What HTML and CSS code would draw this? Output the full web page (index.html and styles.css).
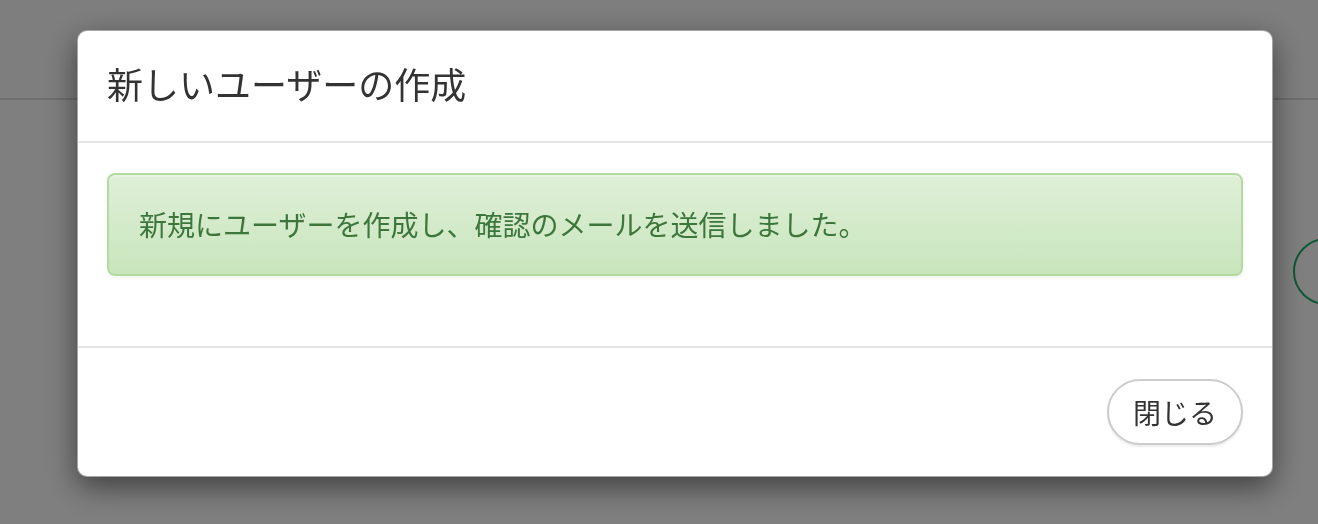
FILE: index.html
```html
<!DOCTYPE html>
<html lang="ja">
<head>
<meta charset="utf-8">
<title>新しいユーザーの作成</title>
<link rel="stylesheet" href="styles.css">
</head>
<body>
<div class="page">
  <div class="page-header"></div>
  <div class="page-content">
    <div class="page-action"></div>
  </div>
</div>
<div class="backdrop"></div>
<div class="modal-layer">
  <div class="modal">
    <div class="modal-header">
      <h4 class="modal-title">新しいユーザーの作成</h4>
    </div>
    <div class="modal-body">
      <div class="alert-success">新規にユーザーを作成し、確認のメールを送信しました。</div>
    </div>
    <div class="modal-footer">
      <button class="btn-close" type="button">閉じる</button>
    </div>
  </div>
</div>
</body>
</html>
```

FILE: styles.css
```css
* { box-sizing: border-box; }
html, body { margin: 0; padding: 0; }
body {
  width: 1318px;
  height: 524px;
  overflow: hidden;
  background: #fff;
  font-family: "Noto Sans CJK JP", "Noto Sans", sans-serif;
  color: #333;
}
.page { width: 1318px; height: 524px; overflow: hidden; }
.page-header {
  height: 100px;
  border-bottom: 2px solid #dcdcdc;
  background: #fdfdfd;
}
.page-content {
  padding-top: 138px;
  padding-left: 1293px;
}
.page-action {
  width: 120px;
  height: 67px;
  border: 2px solid #1cb06e;
  border-radius: 34px;
}
.backdrop {
  position: fixed;
  inset: 0;
  background: rgba(0, 0, 0, 0.5);
}
.modal-layer {
  position: fixed;
  inset: 0;
  padding: 30px 0 0 77px;
}
.modal {
  width: 1196px;
  background: #fff;
  border: 1px solid rgba(0, 0, 0, 0.35);
  border-radius: 10px;
  box-shadow: 0 10px 30px rgba(0, 0, 0, 0.5);
}
.modal-header {
  padding: 27px 29px 32px;
  border-bottom: 2px solid #e5e5e5;
}
.modal-title {
  margin: 0;
  font-size: 36px;
  font-weight: 400;
  line-height: 51px;
  color: #333;
}
.modal-body {
  padding: 30px 29px;
}
.alert-success {
  margin-bottom: 40px;
  padding: 30px 30px;
  border: 2px solid #b2dba1;
  border-radius: 8px;
  background: linear-gradient(to bottom, #dff0d8 0%, #c8e5bc 100%);
  box-shadow: inset 0 2px 0 rgba(255, 255, 255, 0.25), 0 2px 4px rgba(0, 0, 0, 0.05);
  color: #3c763d;
  font-size: 28px;
  line-height: 39px;
}
.modal-footer {
  display: flex;
  justify-content: flex-end;
  padding: 31px 29px 31px;
  border-top: 2px solid #e5e5e5;
}
.btn-close {
  height: 66px;
  padding: 0 24px;
  border: 2px solid #ccc;
  border-radius: 33px;
  background: #fff;
  box-shadow: 0 2px 2px rgba(0, 0, 0, 0.08);
  font-family: "Noto Sans CJK JP", "Noto Sans", sans-serif;
  font-size: 28px;
  line-height: 40px;
  color: #333;
}
```
